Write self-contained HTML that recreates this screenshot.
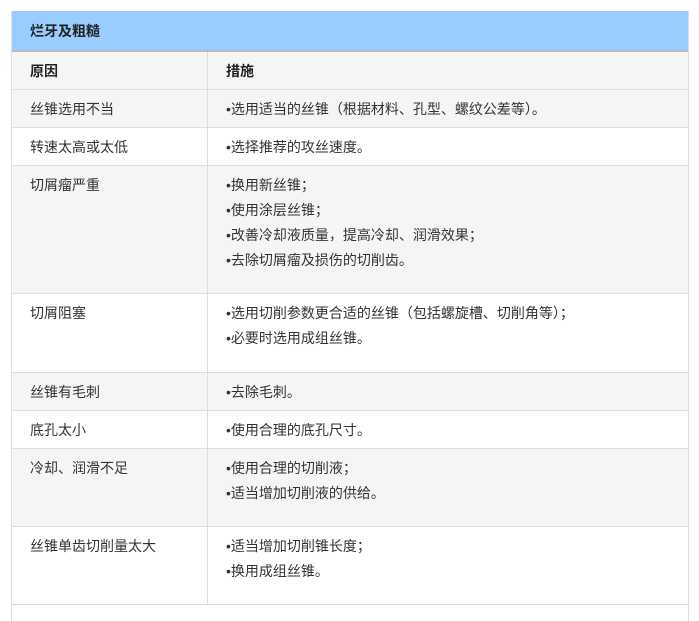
<!DOCTYPE html>
<html><head><meta charset="utf-8"><style>
body{margin:0;background:#fff;font-family:"Liberation Sans","Noto Sans CJK SC",sans-serif;font-size:14px;color:#333;}
.wrap{position:absolute;left:11px;top:11px;width:676px;border-left:1px solid #ddd;border-right:1px solid #ddd;height:610px;}
.h{height:39px;background:#99ccff;font-weight:bold;line-height:41px;padding-left:18px;border-bottom:2px solid #bbb;box-sizing:content-box;color:#222}
table{border-collapse:collapse;width:100%;}
td{border-bottom:1px solid #ddd;vertical-align:top;padding:7px 0 0 18px;line-height:25px;}
td:first-child{width:177px;border-right:1px solid #ddd;}
tr.g{background:#f5f5f5}
.hd td{font-weight:bold;color:#222}
</style></head><body>
<div class="wrap">
<div class="h">烂牙及粗糙</div>
<table>
<tr class="g hd" style="height:37px"><td>原因</td><td>措施</td></tr>
<tr class="g" style="height:38px"><td>丝锥选用不当</td><td>•选用适当的丝锥（根据材料、孔型、螺纹公差等）。</td></tr>
<tr style="height:38px"><td>转速太高或太低</td><td>•选择推荐的攻丝速度。</td></tr>
<tr class="g" style="height:128px"><td>切屑瘤严重</td><td>•换用新丝锥；<br>•使用涂层丝锥；<br>•改善冷却液质量，提高冷却、润滑效果；<br>•去除切屑瘤及损伤的切削齿。</td></tr>
<tr style="height:79px"><td>切屑阻塞</td><td>•选用切削参数更合适的丝锥（包括螺旋槽、切削角等）；<br>•必要时选用成组丝锥。</td></tr>
<tr class="g" style="height:38px"><td>丝锥有毛刺</td><td>•去除毛刺。</td></tr>
<tr style="height:38px"><td>底孔太小</td><td>•使用合理的底孔尺寸。</td></tr>
<tr class="g" style="height:78px"><td>冷却、润滑不足</td><td>•使用合理的切削液；<br>•适当增加切削液的供给。</td></tr>
<tr style="height:78px"><td>丝锥单齿切削量太大</td><td>•适当增加切削锥长度；<br>•换用成组丝锥。</td></tr>
</table>
</div>
</body></html>
